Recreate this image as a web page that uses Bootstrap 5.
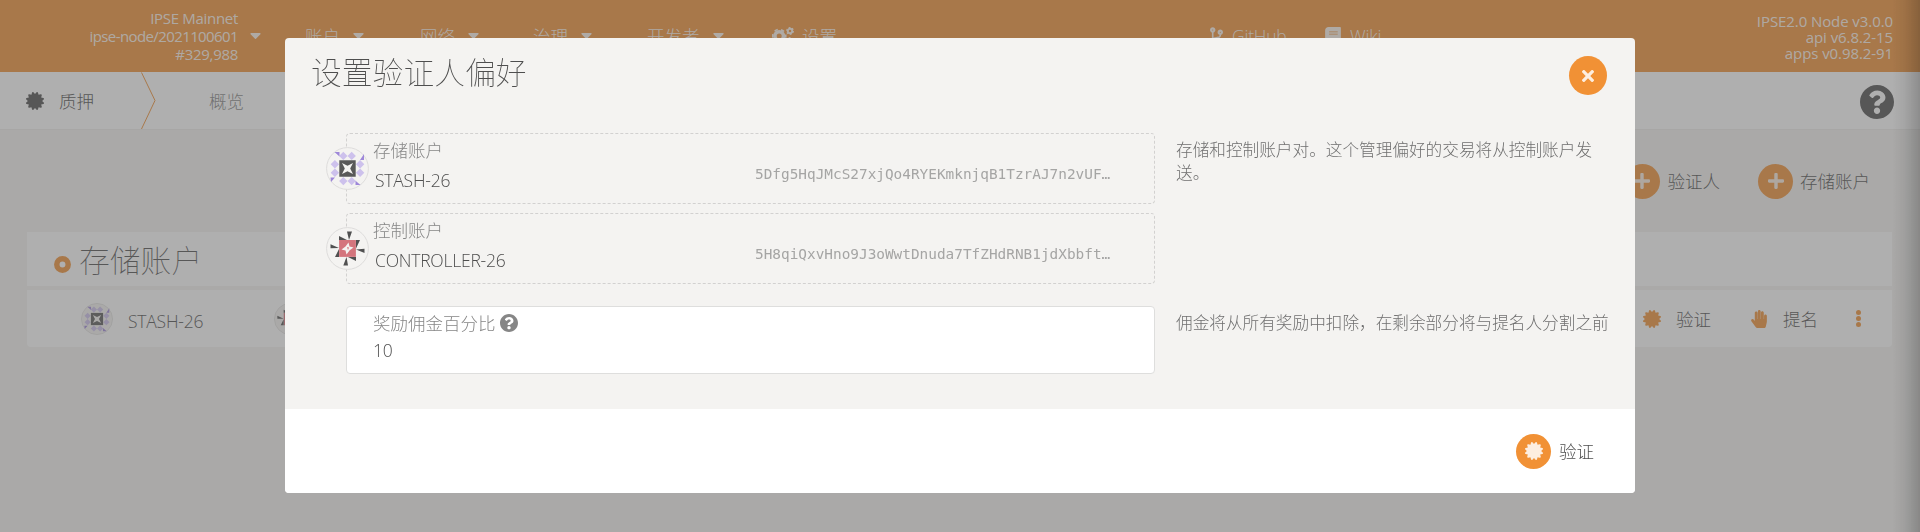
<!DOCTYPE html>
<html lang="zh-CN">
<head>
<meta charset="utf-8">
<title>IPSE Mainnet</title>
<link rel="stylesheet" href="https://cdn.jsdelivr.net/npm/bootstrap@5.3.0/dist/css/bootstrap.min.css">
<style>
:root { --accent: #f19135; }
body { font-family: "Open Sans", "Noto Sans CJK SC", sans-serif; font-size: 17.5px; font-weight: 300; color: #4e4e4e; background: #f4f3f1; line-height: 24px; height: 532px; overflow: hidden; }
svg { display: block; flex: none; fill: currentColor; overflow: visible; }
.cjk { font-family: "Noto Sans CJK SC", sans-serif; }
.latin { letter-spacing: -.22px; }
.topbar { height: 72px; background: var(--accent); color: rgba(255,255,255,.9); }
.node { width: 238px; font-size: 15px; line-height: 18px; font-weight: 400; letter-spacing: -.6px; }
.node .wide { letter-spacing: -.3px; }
.menu-item { gap: 13px; height: 24px; }
.versions { font-size: 15px; line-height: 16px; font-weight: 400; letter-spacing: -.08px; margin-right: 27px; padding-top: 1px; }
.tabs { height: 58px; background: #fff; border-bottom: 1px solid #eeedeb; padding-left: 26px; padding-right: 26px; }
.tabs span { padding-top: 1px; }
.round { width: 35px; height: 35px; border-radius: 50%; background: var(--accent); color: #fdeee0; display: flex; align-items: center; justify-content: center; flex: none; }
.actions { height: 102px; padding-right: 50px; }
.actions span { padding-bottom: 1px; }
.list-head { height: 54px; margin: 0 28px 4px 27px; background: #fff; padding-left: 27px; }
.list-head .heading { font-size: 30.8px; line-height: 40px; font-weight: 100; }
.list-line { height: 57px; margin: 0 28px 0 27px; background: #fff; border-radius: 0 0 4px 4px; padding-left: 54px; padding-right: 31px; }
.orange { color: var(--accent); }
.veil { inset: 0; background: rgba(96,96,96,.5); }
.edge { top: 0; right: 0; bottom: 0; width: 28px; background: linear-gradient(90deg, rgba(0,0,0,0), rgba(0,0,0,.06) 45%, rgba(0,0,0,.2)); }
.dialog { top: 38px; left: 285px; width: 1350px; height: 455px; border-radius: 4px; background: #f4f3f1; overflow: hidden; }
.dialog-head { height: 95px; padding: 14px 28px 0 26px; }
.dialog-head .heading { font-size: 30.8px; line-height: 38px; font-weight: 100; }
.closer { width: 38px; height: 39px; }
.dialog-body { height: 276px; padding-left: 61px; }
.field { width: 809px; padding-left: 26px; border-radius: 4px; border: 1px solid #dededd; background: #fff; flex: none; }
.field.locked { background: none; border: 1px dashed #d2d1d0; height: 71px; position: relative; }
.field label { display: block; color: #868686; line-height: 24px; }
.address { font-family: "DejaVu Sans Mono", monospace; font-size: 14.4px; font-weight: 400; color: #a5a5a4; width: 399px; line-height: 24px; }
.avatar { position: absolute; left: -21px; top: 13px; }
.hint { font-size: 16.65px; line-height: 23px; color: #6f6f6f; margin-left: 21px; width: 440px; }
.dialog-foot { height: 84px; background: #fff; padding-right: 41px; gap: 8px; }
</style>
</head>
<body>
<svg width="0" height="0" class="position-absolute">
<defs>
<symbol id="i-cert" viewBox="0 0 512 512"><path d="M458.622 255.92l45.985-45.005c13.708-12.977 7.316-36.039-10.664-40.339l-62.65-15.99 17.661-62.015c4.991-17.838-11.829-34.663-29.661-29.671l-61.994 17.667-15.984-62.671C337.085.197 313.765-6.276 300.99 7.228L256 53.57 211.011 7.229c-12.63-13.351-36.047-7.234-40.325 10.668l-15.984 62.671-61.995-17.667C74.87 57.907 58.056 74.738 63.046 92.572l17.661 62.015-62.65 15.99C.069 174.878-6.31 197.944 7.392 210.915l45.985 45.005-45.985 45.004c-13.708 12.977-7.316 36.039 10.664 40.339l62.65 15.99-17.661 62.015c-4.991 17.838 11.829 34.663 29.661 29.671l61.994-17.667 15.984 62.671c4.439 18.575 27.696 24.018 40.325 10.668L256 458.61l44.989 46.001c12.5 13.488 35.987 7.486 40.325-10.668l15.984-62.671 61.994 17.667c17.836 4.994 34.651-11.837 29.661-29.671l-17.661-62.015 62.65-15.99c17.987-4.302 24.366-27.367 10.664-40.339l-45.984-45.004z"/></symbol>
<symbol id="i-help" viewBox="8 8 496 496"><path d="M504 256c0 136.997-111.043 248-248 248S8 392.997 8 256C8 119.083 119.043 8 256 8s248 111.083 248 248zM262.655 90c-54.497 0-89.255 22.957-116.549 63.758-3.536 5.286-2.353 12.415 2.715 16.258l34.699 26.31c5.205 3.947 12.621 3.008 16.665-2.122 17.864-22.658 30.113-35.797 57.303-35.797 20.429 0 45.698 13.148 45.698 32.958 0 14.976-12.363 22.667-32.534 33.976C247.128 238.528 216 254.941 216 296v4c0 6.627 5.373 12 12 12h56c6.627 0 12-5.373 12-12v-1.333c0-28.462 83.186-29.647 83.186-106.667 0-58.002-60.165-102-116.531-102zM256 338c-25.365 0-46 20.635-46 46 0 25.364 20.635 46 46 46s46-20.636 46-46c0-25.365-20.635-46-46-46z"/></symbol>
<symbol id="i-hand" viewBox="0 0 448 512"><path d="M408.781 128.007C386.356 127.578 368 146.36 368 168.79V256h-8V79.79c0-22.43-18.356-41.212-40.781-40.783C297.488 39.423 280 57.169 280 79v177h-8V40.79C272 18.36 253.644-.422 231.219.007 209.488.423 192 18.169 192 40v216h-8V80.79c0-22.43-18.356-41.212-40.781-40.783C121.488 40.423 104 58.169 104 80v235.992l-31.648-43.519c-12.993-17.866-38.009-21.817-55.877-8.823-17.865 12.994-21.815 38.01-8.822 55.877l125.601 172.705A48 48 0 0 0 172.073 512h197.59c22.274 0 41.622-15.324 46.724-37.006l26.508-112.66a192.011 192.011 0 0 0 5.104-43.975V168c.001-21.831-17.487-39.577-39.218-39.993z"/></symbol>
<symbol id="i-plus" viewBox="0 32 448 448"><path d="M416 208H272V64c0-17.67-14.33-32-32-32h-32c-17.67 0-32 14.33-32 32v144H32c-17.67 0-32 14.33-32 32v32c0 17.67 14.33 32 32 32h144v144c0 17.67 14.33 32 32 32h32c17.67 0 32-14.33 32-32V304h144c17.67 0 32-14.33 32-32v-32c0-17.67-14.33-32-32-32z"/></symbol>
<symbol id="i-times" viewBox="0 80 352 352"><path d="M242.72 256l100.07-100.07c12.28-12.28 12.28-32.19 0-44.48l-22.24-22.24c-12.28-12.28-32.19-12.28-44.48 0L176 189.28 75.93 89.21c-12.28-12.28-32.19-12.28-44.48 0L9.21 111.45c-12.28 12.28-12.28 32.19 0 44.48L109.28 256 9.21 356.07c-12.28 12.28-12.28 32.19 0 44.48l22.24 22.24c12.28 12.28 32.2 12.28 44.48 0L176 322.72l100.07 100.07c12.28 12.28 32.2 12.28 44.48 0l22.24-22.24c12.28-12.28 12.28-32.19 0-44.48L242.72 256z"/></symbol>
<symbol id="i-caret" viewBox="0 192 320 170"><path d="M31.3 192h257.3c17.8 0 26.7 21.5 14.1 34.1L174.1 354.8c-7.8 7.8-20.5 7.8-28.3 0L17.2 226.1C4.6 213.5 13.5 192 31.3 192z"/></symbol>
<symbol id="i-cogs" viewBox="0 0 22 18"><g fill="none" stroke="currentColor"><circle cx="7.2" cy="9" r="4.3" stroke-width="3.6"/><circle cx="7.2" cy="9" r="6.6" stroke-width="1.6" stroke-dasharray="3.6 3.31" stroke-dashoffset="1.8"/><circle cx="18" cy="4" r="2.2" stroke-width="1.9"/><circle cx="18" cy="4" r="3.4" stroke-width="1.1" stroke-dasharray="1.8 1.76"/><circle cx="18" cy="14" r="2.2" stroke-width="1.9"/><circle cx="18" cy="14" r="3.4" stroke-width="1.1" stroke-dasharray="1.8 1.76"/></g></symbol>
<symbol id="i-branch" viewBox="0 0 384 512"><path fill-rule="evenodd" d="M384 144c0-44.2-35.8-80-80-80s-80 35.8-80 80c0 36.4 24.3 67.1 57.5 76.8-.6 16.1-4.2 28.5-11 36.9-15.4 19.2-49.3 22.4-85.2 25.7-28.2 2.6-57.4 5.4-81.3 16.9v-144c32.5-10.2 56-40.5 56-76.3 0-44.2-35.8-80-80-80S0 35.8 0 80c0 35.8 23.5 66.1 56 76.3v199.3C23.5 365.9 0 396.2 0 432c0 44.2 35.8 80 80 80s80-35.8 80-80c0-34-21.2-63.1-51.2-74.6 3.1-5.2 7.8-9.8 14.9-13.4 16.2-8.2 40.4-10.4 66.1-12.8 42.2-3.9 90-8.4 118.2-43.4 14-17.4 21.1-39.8 21.6-67.9 31.6-10.8 54.4-40.7 54.4-75.9zM80 64a16 16 0 1 1 0 32 16 16 0 0 1 0-32zM304 128a16 16 0 1 1 0 32 16 16 0 0 1 0-32zM80 416a16 16 0 1 1 0 32 16 16 0 0 1 0-32z"/></symbol>
<symbol id="i-book" viewBox="0 0 448 512"><path fill-rule="evenodd" d="M448 360V24c0-13.300-10.700-24-24-24H96C43 0 0 43 0 96v320c0 53 43 96 96 96h328c13.300 0 24-10.700 24-24v-16c0-7.500-3.500-14.300-8.900-18.700-4.200-15.400-4.200-59.300 0-74.700 5.400-4.300 8.900-11.100 8.900-18.600zM112 128h246v24H112zM112 192h246v24H112zM96 384h288v64H96c-42 0-42-64 0-64z"/></symbol>
<symbol id="i-stash" viewBox="-21.500 -21.500 43 43">
<circle r="20.900" fill="#f4f3f1" stroke="#dddcdb" stroke-width="1"/>
<path fill="#cdc1ec" d="M-4.200-16.800l4.200 4.200-4.200 4.200-4.200-4.200zM4.200-16.800l4.200 4.200-4.200 4.200-4.200-4.200zM-4.200 8.400L0 12.600l-4.200 4.200-4.200-4.200zM4.200 8.400l4.200 4.200-4.200 4.200L0 12.600zM-12.600-8.400l4.200 4.200-4.200 4.200-4.200-4.200zM-12.600 0l4.200 4.200-4.200 4.200-4.200-4.200zM12.600-8.400l4.200 4.200-4.200 4.200-4.200-4.200zM12.600 0l4.200 4.200-4.200 4.200-4.200-4.200z"/>
<path fill="#9e87d9" d="M-13-16.500h5v4.500zM16.500-14.500v6h-4zM13 16.500H8v-4.300zM-17 9h4.500l-4 4.500z"/>
<path fill="#585858" d="M-8.200-8.200H8.200V8.200H-8.200z"/><path fill="#f4f3f1" d="M-5.500-5.500L0-2.700 5.500-5.500 2.700 0 5.500 5.500 0 2.700-5.500 5.500-2.700 0z"/>
</symbol>
<symbol id="i-controller" viewBox="-21.500 -21.500 43 43">
<circle r="20.900" fill="#f4f3f1" stroke="#dddcdb" stroke-width="1"/>
<path fill="#d4757d" d="M-8.400-8.400H8.400V8.400H-8.400z"/>
<path fill="#505050" d="M-.5-17H4.500L1.500-8.500zM-8.500-12.500L-.5-8.500h-8zM17 .2v4.300L8.500 1zM12.500-8.500L8.500 0v-8.500zM.5 17h-4.700L-1 8.500zM8.500 12.500l-8-4h8zM-17-4.200l8.500 3.700L-17-.2zM-12.500 8.500l4-8v8z"/>
<path fill="#f4f3f1" d="M1-6L2-2 6-1 2.200 1.800-1 6-2 2-6 1-2-2z"/><path fill="#d4757d" d="M-.5-1.500l2 .5-1 2.500z"/>
</symbol>
</defs>
</svg>

<header class="topbar d-flex align-items-center">
  <div class="node text-end"><span class="wide">IPSE Mainnet</span><br>ipse-node/2021100601<br><span class="wide">#329,988</span></div>
  <svg width="11" height="6" style="margin-left:12px"><use href="#i-caret"/></svg>
  <nav class="d-flex align-items-center cjk" style="margin-left:44px">
    <div class="menu-item d-flex align-items-center" style="width:115px">账户<svg width="11" height="6"><use href="#i-caret"/></svg></div>
    <div class="menu-item d-flex align-items-center" style="width:113px">网络<svg width="11" height="6"><use href="#i-caret"/></svg></div>
    <div class="menu-item d-flex align-items-center" style="width:114px">治理<svg width="11" height="6"><use href="#i-caret"/></svg></div>
    <div class="menu-item d-flex align-items-center" style="width:125px">开发者<svg width="11" height="6"><use href="#i-caret"/></svg></div>
    <div class="menu-item d-flex align-items-center gap-2"><svg width="22" height="18"><use href="#i-cogs"/></svg>设置</div>
  </nav>
  <nav class="d-flex align-items-center latin" style="margin-left:373px">
    <div class="d-flex align-items-center" style="width:115px;gap:9px"><svg width="13" height="18"><use href="#i-branch"/></svg>GitHub</div>
    <div class="d-flex align-items-center" style="gap:9px"><svg width="16" height="18"><use href="#i-book"/></svg>Wiki</div>
  </nav>
  <div class="versions text-end ms-auto">IPSE2.0 Node v3.0.0<br>api v6.8.2-15<br>apps v0.98.2-91</div>
</header>

<div class="tabs d-flex align-items-center cjk">
  <svg width="18" height="18"><use href="#i-cert"/></svg>
  <span style="margin-left:15px">质押</span>
  <svg class="orange" width="15" height="57" style="margin-left:47px"><path d="M.5 .5L14 28.500.5 57" fill="none" stroke="currentColor"/></svg>
  <span style="margin-left:53px;opacity:.7">概览</span>
  <svg class="ms-auto" width="34" height="34" style="margin-top:3px"><use href="#i-help"/></svg>
</div>

<main>
  <div class="actions d-flex justify-content-end align-items-center cjk">
    <div class="round"><svg width="16" height="16"><use href="#i-plus"/></svg></div><span style="margin:0 38px 0 8px">验证人</span>
    <div class="round"><svg width="16" height="16"><use href="#i-plus"/></svg></div><span style="margin-left:7px">存储账户</span>
  </div>
  <div class="list-head d-flex align-items-center cjk">
    <svg class="orange" width="17" height="17" style="margin-top:10px"><circle cx="8.500" cy="8.500" r="5.700" fill="none" stroke="currentColor" stroke-width="5.500"/></svg>
    <div class="heading" style="margin-left:8px">存储账户</div>
  </div>
  <div class="list-line d-flex align-items-center">
    <svg width="32" height="32"><use href="#i-stash"/></svg>
    <span class="latin" style="margin-left:15px;width:146px;padding-top:4px">STASH-26</span>
    <svg width="32" height="32"><use href="#i-controller"/></svg>
    <div class="d-flex align-items-center cjk ms-auto">
      <svg class="orange" width="18" height="18"><use href="#i-cert"/></svg><span style="margin:0 40px 0 15px">验证</span>
      <svg class="orange" width="16" height="18"><use href="#i-hand"/></svg><span style="margin:0 38px 0 16px">提名</span>
      <svg class="orange" width="5" height="17"><circle cx="2.500" cy="2.500" r="2.500"/><circle cx="2.500" cy="8.500" r="2.500"/><circle cx="2.500" cy="14.500" r="2.500"/></svg>
    </div>
  </div>
</main>

<div class="veil position-fixed"></div>
<div class="edge position-fixed"></div>

<section class="dialog position-fixed" role="dialog">
  <div class="dialog-head d-flex justify-content-between align-items-start cjk">
    <div class="heading">设置验证人偏好</div>
    <div class="round closer" style="margin-top:4px"><svg width="12" height="12"><use href="#i-times"/></svg></div>
  </div>
  <div class="dialog-body">
    <div class="d-flex">
      <div class="d-flex flex-column" style="gap:9px">
        <div class="field locked">
          <svg class="avatar" width="43" height="43"><use href="#i-stash"/></svg>
          <label class="cjk" style="padding-top:4px">存储账户</label>
          <div class="d-flex justify-content-between" style="padding:6px 0 0 2px"><span class="latin">STASH-26</span><span class="address" style="margin-top:-6px">5Dfg5HqJMcS27xjQo4RYEKmknjqB1TzrAJ7n2vUF…</span></div>
        </div>
        <div class="field locked">
          <svg class="avatar" width="43" height="43"><use href="#i-controller"/></svg>
          <label class="cjk" style="padding-top:4px">控制账户</label>
          <div class="d-flex justify-content-between" style="padding:6px 0 0 2px"><span class="latin">CONTROLLER-26</span><span class="address" style="margin-top:-6px">5H8qiQxvHno9J3oWwtDnuda7TfZHdRNB1jdXbbft…</span></div>
        </div>
      </div>
      <div class="hint cjk" style="padding-top:5px">存储和控制账户对。这个管理偏好的交易将从控制账户发送。</div>
    </div>
    <div class="d-flex" style="margin-top:22px">
      <div class="field" style="height:68px">
        <label class="d-flex align-items-center cjk" style="padding-top:4px;gap:4px">奖励佣金百分比<svg width="18" height="18"><use href="#i-help"/></svg></label>
        <div class="latin" style="padding-top:3px">10</div>
      </div>
      <div class="hint cjk" style="padding-top:5px">佣金将从所有奖励中扣除，在剩余部分将与提名人分割之前</div>
    </div>
  </div>
  <div class="dialog-foot d-flex align-items-center justify-content-end cjk">
    <div class="round"><svg width="18" height="18"><use href="#i-cert"/></svg></div><span>验证</span>
  </div>
</section>
<script src="https://cdn.jsdelivr.net/npm/bootstrap@5.3.0/dist/js/bootstrap.bundle.min.js"></script>
</body>
</html>
